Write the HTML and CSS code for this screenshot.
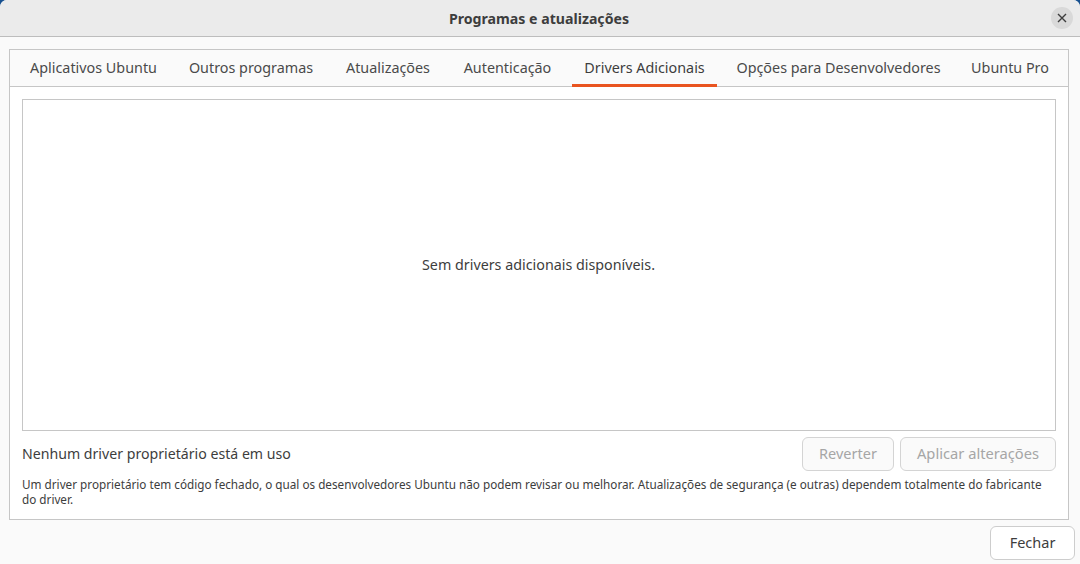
FILE: index.html
```html
<!DOCTYPE html>
<html lang="pt-BR">
<head>
    <meta charset="UTF-8">
    <meta name="viewport" content="width=device-width, initial-scale=1.0">
    <title>Programas e atualizações</title>
    <link rel="stylesheet" href="styles.css">
</head>
<body>
    <div class="window">
        <div class="titlebar">
            <h1>Programas e atualizações</h1>
            <button class="close" aria-label="Fechar">
                <svg width="10" height="10" viewBox="0 0 10 10"><path d="M1 1 L9 9 M9 1 L1 9" stroke="#3d3d3d" stroke-width="1.4" fill="none"/></svg>
            </button>
        </div>

        <div class="content">
            <div class="notebook">
                <div class="tabs">
                    <div class="tab">Aplicativos Ubuntu</div>
                    <div class="tab">Outros programas</div>
                    <div class="tab">Atualizações</div>
                    <div class="tab">Autenticação</div>
                    <div class="tab active">Drivers Adicionais</div>
                    <div class="tab">Opções para Desenvolvedores</div>
                    <div class="tab">Ubuntu Pro</div>
                </div>
                <div class="page">
                    <div class="drivers-box"><span class="empty">Sem drivers adicionais disponíveis.</span></div>
                    <div class="status-row">
                        <span class="status">Nenhum driver proprietário está em uso</span>
                        <div class="actions">
                            <button class="btn revert" disabled>Reverter</button>
                            <button class="btn apply" disabled>Aplicar alterações</button>
                        </div>
                    </div>
                    <p class="note">Um driver proprietário tem código fechado, o qual os desenvolvedores Ubuntu não podem revisar ou melhorar. Atualizações de segurança (e outras) dependem totalmente do fabricante do driver.</p>
                </div>
            </div>
            <div class="footer">
                <button class="btn close-btn">Fechar</button>
            </div>
        </div>
    </div>
</body>
</html>
```

FILE: styles.css
```css
html, body {
    margin: 0;
    height: 100%;
}
body {
    background: #17508f;
    font-family: "Noto Sans", sans-serif;
    font-size: 14px;
    color: #3d3d3d;
    overflow: hidden;
}
.window {
    height: 564px;
    background: #fafafa;
    border-radius: 7px 7px 0 0;
    overflow: hidden;
}
.titlebar {
    height: 36px;
    padding-right: 2px;
    background: #ebebeb;
    border-bottom: 1px solid #bdbdbd;
    display: flex;
    align-items: center;
    justify-content: center;
    position: relative;
}
.titlebar h1 {
    margin: 0;
    font-size: 14.15px;
    font-weight: 700;
    color: #3d3d3d;
}
.close {
    position: absolute;
    right: 7px;
    top: 7px;
    width: 22px;
    height: 22px;
    padding: 0;
    border: none;
    border-radius: 50%;
    background: #d9d9d9;
    display: flex;
    align-items: center;
    justify-content: center;
}
.content {
    padding: 12px 11px 0 9px;
}
.notebook {
    height: 469px;
    border: 1px solid #c6c6c6;
    display: flex;
    flex-direction: column;
    background: #fff;
}
.tabs {
    height: 36px;
    display: grid;
    grid-template-columns: 151px 148px 110px 113px 145px 227px 100px;
    column-gap: 8px;
    padding-left: 8px;
    background: #fafafa;
    border-bottom: 1px solid #c6c6c6;
}
.tab {
    line-height: 36px;
    font-size: 14.35px;
    text-align: center;
    color: #4a4a4a;
    white-space: nowrap;
}
.tab.active {
    color: #3d3d3d;
    border-bottom: 3px solid #e95420;
    height: 34px;
}
.page {
    flex: 1;
    padding: 12px 12px 0 12px;
}
.drivers-box {
    height: 330px;
    border: 1px solid #c6c6c6;
    display: flex;
    align-items: center;
    justify-content: center;
    color: #3d3d3d;
}
.empty {
    font-size: 14.3px;
    padding-bottom: 2px;
    padding-right: 1px;
}
.status-row {
    display: flex;
    justify-content: space-between;
    align-items: center;
    margin-top: 6px;
}
.status {
    font-size: 14.15px;
    padding-bottom: 2px;
}
.actions {
    display: flex;
    gap: 6px;
}
.btn {
    height: 34px;
    padding: 0 0 2px;
    font-family: inherit;
    font-size: 14.5px;
    background: #fafafa;
    border: 1px solid #cdcdcd;
    border-radius: 6px;
    color: #3d3d3d;
}
.btn:disabled {
    color: #a6a6a6;
    border-color: #d4d4d4;
}
.revert {
    width: 92px;
}
.apply {
    width: 156px;
    font-size: 14.7px;
}
.note {
    margin: 6px 0 0;
    font-size: 11.73px;
    line-height: 15px;
}
.footer {
    display: flex;
    justify-content: flex-end;
    margin-top: 6px;
    margin-right: -6px;
}
.close-btn {
    width: 85px;
    background: #fff;
}
```
